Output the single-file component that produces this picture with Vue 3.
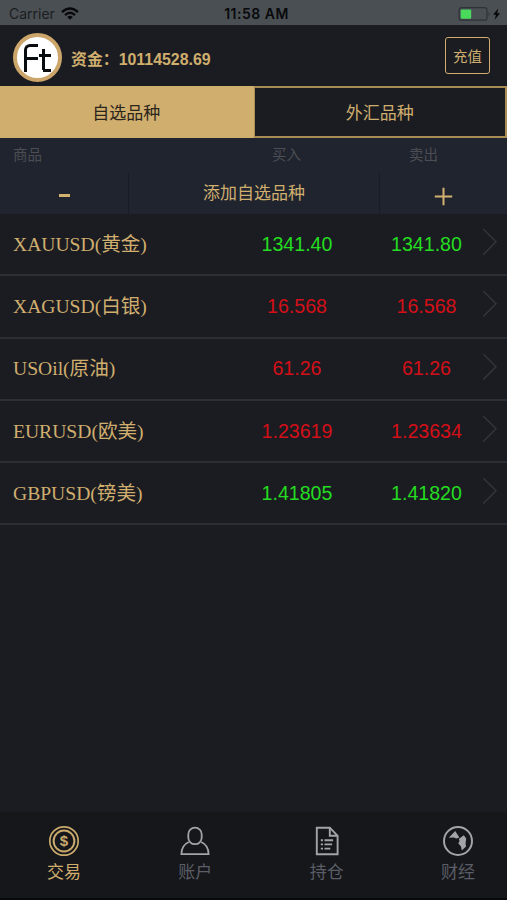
<script setup>
const quotes = [
  { name: 'XAUUSD(黄金)', buy: '1341.40', sell: '1341.80', trend: 'up' },
  { name: 'XAGUSD(白银)', buy: '16.568', sell: '16.568', trend: 'down' },
  { name: 'USOil(原油)', buy: '61.26', sell: '61.26', trend: 'down' },
  { name: 'EURUSD(欧美)', buy: '1.23619', sell: '1.23634', trend: 'down' },
  { name: 'GBPUSD(镑美)', buy: '1.41805', sell: '1.41820', trend: 'up' },
]
</script>

<template>
  <div class="app">
    <div class="status">
      <div class="carrier">
        <span>Carrier</span>
        <svg class="wifi" width="18" height="13" viewBox="0 0 18 13" fill="none" stroke="#08090b" stroke-width="2.4">
          <path d="M1 5.1 Q9 -2 17 5.1" />
          <path d="M4 8.1 Q9 3.6 14 8.1" />
          <path d="M6.2 9.9 Q9 7.6 11.8 9.9 L9 12.8 Z" fill="#08090b" stroke="none" />
        </svg>
      </div>
      <div class="clock">11:58 AM</div>
      <div class="power">
        <svg width="46" height="16" viewBox="0 0 46 16">
          <rect x="1" y="1.7" width="28" height="12.5" rx="2.5" fill="none" stroke="#2f3338" stroke-width="1.2" />
          <rect x="2.7" y="3.4" width="10.5" height="9.4" rx="1" fill="#49da5c" />
          <path d="M30.6 6 q2 2 0 4 z" fill="#2f3338" />
          <path d="M40.2 2.5 L35 8.8 H38 L36.6 13.8 L42.2 7.2 H39.2 Z" fill="#08090b" />
        </svg>
      </div>
    </div>

    <header class="header">
      <div class="logo">
        <span class="mark-f"></span>
        <span class="mark-t"></span>
      </div>
      <div class="funds">资金：10114528.69</div>
      <button class="recharge">充值</button>
    </header>

    <nav class="tabs">
      <div class="tab active">自选品种</div>
      <div class="tab">外汇品种</div>
    </nav>

    <div class="columns">
      <span>商品</span>
      <span>买入</span>
      <span>卖出</span>
    </div>

    <div class="toolbar">
      <div class="tool side"><i class="minus"></i></div>
      <div class="tool add">添加自选品种</div>
      <div class="tool side">
        <svg class="plus" width="19" height="19" viewBox="0 0 19 19" stroke="#d3b271" stroke-width="2">
          <path d="M.8 9.5H18.2M9.5 .8V18.2" />
        </svg>
      </div>
    </div>

    <main class="list">
      <div v-for="q in quotes" :key="q.name" class="row">
        <span class="name">{{ q.name }}</span>
        <span class="price" :class="q.trend">{{ q.buy }}</span>
        <span class="price" :class="q.trend">{{ q.sell }}</span>
        <svg class="chevron" width="16" height="28" viewBox="0 0 16 28" fill="none" stroke="#323439" stroke-width="1.5">
          <path d="M1.2 1 L14 13.8 L1.2 26.6" />
        </svg>
      </div>
    </main>

    <footer class="tabbar">
      <div class="item current">
        <svg width="32" height="32" viewBox="0 0 32 32" fill="none" stroke="#c9aa6c">
          <circle cx="16" cy="16" r="14.2" stroke-width="1.7" />
          <circle cx="16" cy="16" r="10.4" stroke-width="2" />
          <text x="16" y="21.4" text-anchor="middle" class="dollar">$</text>
        </svg>
        <span>交易</span>
      </div>
      <div class="item">
        <svg width="32" height="32" viewBox="0 0 32 32" fill="none" stroke="#a3a4a7" stroke-width="1.8">
          <rect x="9.3" y="2.6" width="13.4" height="16.6" rx="6.6" />
          <path d="M9.8 17 C4.7 19.3 2.4 23.5 2.4 29.2 H29.6 C29.6 23.5 27.3 19.3 22.2 17" />
        </svg>
        <span>账户</span>
      </div>
      <div class="item">
        <svg width="32" height="32" viewBox="0 0 32 32" fill="none" stroke="#a3a4a7" stroke-width="1.9">
          <path d="M5.8 2.7 H18.8 L26.6 10.8 V29.2 H5.8 Z" />
          <path d="M18.8 2.7 V10.8 H26.6" />
          <path d="M9.8 15.2h2.2M13.5 15.2h8.6M9.8 19.4h2.2M13.5 19.4h7.6M9.8 23.6h2.2M13.5 23.6h5.8" />
        </svg>
        <span>持仓</span>
      </div>
      <div class="item">
        <svg width="32" height="32" viewBox="0 0 32 32" fill="none">
          <circle cx="16" cy="16" r="14" stroke="#a3a4a7" stroke-width="2" />
          <path d="M6.8 12.8 L13.2 6 L17.4 12.6 L14.4 13.4 L11.8 12.4 Z M16.8 14 L21.8 10.2 L24.2 13.6 L23.6 18.6 L24 21.4 L19.8 25.6 L19 21.6 L16.2 18.2 L17.6 16.2 Z" fill="#a3a4a7" />
        </svg>
        <span>财经</span>
      </div>
    </footer>
  </div>
</template>

<style>
body {
  background: #1a1b21;
}
</style>

<style scoped>
.app {
  display: flex;
  flex-direction: column;
  height: 900px;
  overflow: hidden;
  box-sizing: border-box;
  border-bottom: 2px solid #08090c;
  background: #1b1c22;
  color: #cfae6e;
  font-family: "Liberation Sans", "Noto Sans CJK SC", sans-serif;
}

.status {
  display: grid;
  grid-template-columns: 1fr auto 1fr;
  align-items: center;
  height: 25px;
  padding: 2px 3px 0 9px;
  box-sizing: border-box;
  background: #4a4f54;
  color: #1b1d20;
  font: 14px Inter, sans-serif;
}
.carrier {
  display: flex;
  align-items: center;
  gap: 6px;
}
.clock {
  font-size: 14px;
  font-weight: 600;
  letter-spacing: 0.5px;
  color: #08090b;
}
.power {
  display: flex;
  justify-content: flex-end;
}

.header {
  display: flex;
  align-items: center;
  height: 61px;
  padding: 4px 17px 0 13px;
  box-sizing: border-box;
}
.logo {
  display: flex;
  width: 49px;
  height: 49px;
  padding: 7px 0 0 7px;
  box-sizing: border-box;
  border: 4.5px solid #cba569;
  border-radius: 50%;
  background: #fff;
}
.mark-f {
  width: 14px;
  height: 28px;
  box-sizing: border-box;
  border-top: 3px solid #0a0d10;
  border-left: 3px solid #0a0d10;
  border-top-left-radius: 6px;
  background: linear-gradient(#0a0d10, #0a0d10) 0 10px / 11px 3px no-repeat;
}
/* The crossbar reaches past the stem on both sides. */
.mark-t {
  width: 12px;
  height: 23px;
  margin: 5px 0 0 1px;
  background:
    linear-gradient(#0a0d10, #0a0d10) 0 5px / 12px 3px no-repeat,
    linear-gradient(#0a0d10, #0a0d10) 3px 0 / 3px 21px no-repeat,
    linear-gradient(#0a0d10, #0a0d10) 4px 20px / 8px 3px no-repeat;
}
.funds {
  margin: 2px 0 0 9px;
  font-size: 15.9px;
  font-weight: 600;
}
.recharge {
  width: 45px;
  height: 37px;
  margin: -4px 0 0 auto;
  padding: 0 0 1px;
  border: 1.5px solid #cfae6e;
  border-radius: 3px;
  background: none;
  color: #cfae6e;
  font: 14.5px "Noto Sans CJK SC", sans-serif;
}

.tabs {
  display: flex;
  height: 52px;
}
.tab {
  display: flex;
  flex: 1;
  align-items: center;
  justify-content: center;
  padding-bottom: 2px;
  box-sizing: border-box;
  border: 2px solid #a98c55;
  border-left-width: 1px;
  font-size: 17px;
}
.tab.active {
  border-color: #cfae6e;
  background: #cfae6e;
  color: #2b251b;
}

.columns {
  display: grid;
  grid-template-columns: 259px 137px 1fr;
  align-items: center;
  height: 34px;
  padding: 0 0 4px 13px;
  box-sizing: border-box;
  background: #20242e;
  color: #4c4e54;
  font-size: 14.5px;
}

.toolbar {
  display: grid;
  grid-template-columns: 128px 1fr 127px;
  height: 42px;
  background: #20242e;
}
.tool {
  display: flex;
  align-items: center;
  justify-content: center;
}
.add {
  padding-bottom: 3px;
  border: 1px solid #191c23;
  border-width: 0 1px;
  font-size: 17px;
}
.minus {
  width: 11px;
  height: 3px;
  margin-top: 5px;
  background: #d3b271;
}
.plus {
  margin-top: 6px;
}

.list {
  flex: 1;
}
.row {
  display: grid;
  grid-template-columns: 219px 130px 129px 1fr;
  align-items: center;
  height: 62.3px;
  padding-left: 13px;
  box-sizing: border-box;
  border-bottom: 2px solid #2c2e35;
}
.name {
  padding-bottom: 4px;
  font: 19.6px "Liberation Serif", "Noto Sans CJK SC", serif;
}
.price {
  font-size: 19.6px;
  text-align: center;
}
.up {
  color: #24dc20;
}
.down {
  color: #d40f17;
}
.chevron {
  margin: -4px 0 0 -9px;
}

.tabbar {
  display: flex;
  justify-content: space-between;
  height: 86px;
  padding: 13px 17px 0 32px;
  box-sizing: border-box;
  background: #16171b;
}
.item {
  display: flex;
  flex-direction: column;
  align-items: center;
  width: 64px;
  color: #5b5e66;
  font-size: 17px;
  line-height: 31px;
}
.current {
  color: #cfae6e;
}
.dollar {
  fill: #c9aa6c;
  stroke: none;
  font: bold 15px "Liberation Sans", sans-serif;
}
</style>
